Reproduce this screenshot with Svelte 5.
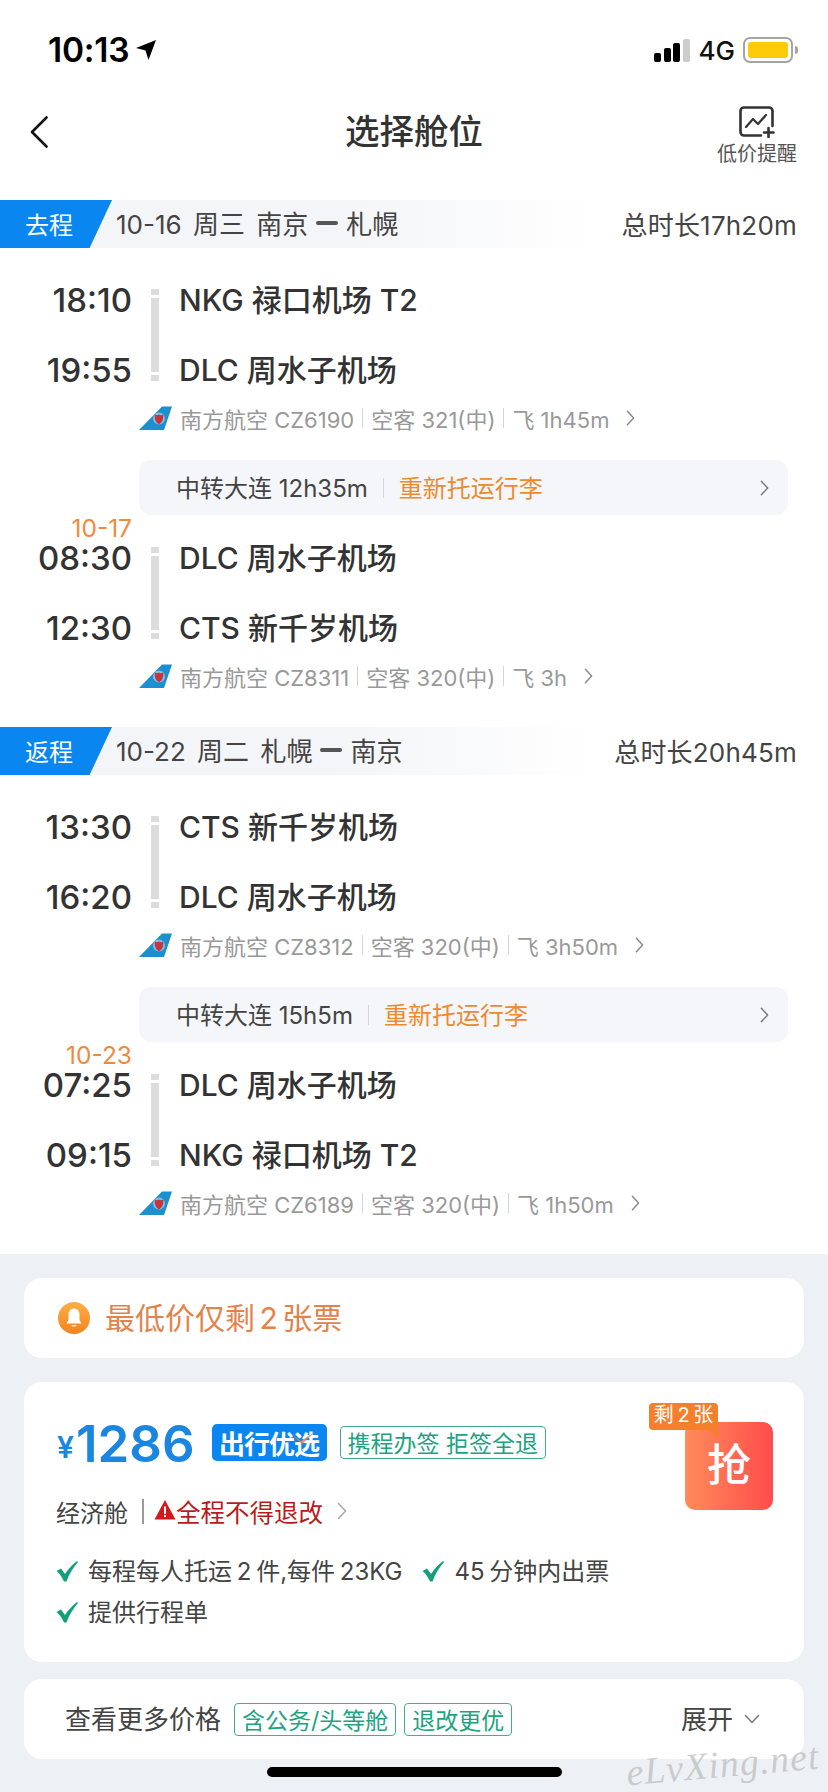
<script>
  const legs = [
    {
      tag: '去程',
      route: '10-16 周三 南京',
      dest: '札幌',
      total: '总时长17h20m',
      segs: [
        { dep: '18:10', arr: '19:55', from: 'NKG 禄口机场 T2', to: 'DLC 周水子机场', flight: '南方航空 CZ6190', plane: '空客 321(中)', time: '飞 1h45m' },
        { date: '10-17', dep: '08:30', arr: '12:30', from: 'DLC 周水子机场', to: 'CTS 新千岁机场', flight: '南方航空 CZ8311', plane: '空客 320(中)', time: '飞 3h' }
      ],
      transfer: '中转大连 12h35m'
    },
    {
      tag: '返程',
      route: '10-22 周二 札幌',
      dest: '南京',
      total: '总时长20h45m',
      segs: [
        { dep: '13:30', arr: '16:20', from: 'CTS 新千岁机场', to: 'DLC 周水子机场', flight: '南方航空 CZ8312', plane: '空客 320(中)', time: '飞 3h50m' },
        { date: '10-23', dep: '07:25', arr: '09:15', from: 'DLC 周水子机场', to: 'NKG 禄口机场 T2', flight: '南方航空 CZ6189', plane: '空客 320(中)', time: '飞 1h50m' }
      ],
      transfer: '中转大连 15h5m'
    }
  ]
</script>

{#snippet chevron(cls)}
  <svg class={cls} viewBox="0 0 10 18" fill="none" stroke="currentColor" stroke-width="1.6" stroke-linecap="round" stroke-linejoin="round">
    <path d="M1.5 1.5 8.5 9 1.5 16.5" />
  </svg>
{/snippet}

{#snippet check()}
  <svg class="check" viewBox="0 0 22 22">
    <path d="M.5 11 5 8.500 9 14C12 9 16 5 21 1L22 2C17 8 13 14 10.500 21.500H8C6 17 4 14 .5 11Z" fill="#12a07c" />
  </svg>
{/snippet}

<div class="page">
  <div class="status">
    <div class="clock">
      <span>10:13</span>
      <svg viewBox="0 0 22 22" class="loc"><path d="M21 1 13.500 21 10.500 11.500 1 9Z" fill="#000" /></svg>
    </div>
    <div class="status-right">
      <div class="signal">
        <i class="b1"></i><i class="b2"></i><i class="b3"></i><i class="b4"></i>
      </div>
      <span class="net">4G</span>
      <div class="battery"><div class="battery-fill"></div></div>
      <div class="nub"></div>
    </div>
  </div>

  <div class="nav">
    <svg class="back" viewBox="0 0 18 32" fill="none" stroke="#111" stroke-width="2.600" stroke-linecap="round" stroke-linejoin="round">
      <path d="M16.500 1.500 2 16 16.500 30.500" />
    </svg>
    <h1>选择舱位</h1>
    <div class="alert">
      <svg viewBox="0 0 36 32" fill="none" stroke="#333" stroke-width="2.600" stroke-linecap="round" stroke-linejoin="round">
        <path d="M22 29.500H5C3 29.500 1.500 28 1.500 26V5C1.500 3 3 1.500 5 1.500H30C32 1.500 33.500 3 33.500 5V20" />
        <path d="M7 21 14 13 19 18 27 9" stroke-width="2.200" />
        <path d="M29.500 22V31M25 26.500H34.500" />
      </svg>
      <span>低价提醒</span>
    </div>
  </div>

  {#each legs as leg}
    <section class="leg">
      <div class="leg-head">
        <span class="tag">{leg.tag}</span>
        <span class="route">{leg.route}<i class="dash"></i>{leg.dest}</span>
        <span class="total">{leg.total}</span>
      </div>

      {#each leg.segs as seg, i}
        {#if seg.date}
          <div class="next-date">{seg.date}</div>
        {/if}
        <div class="seg">
          <div class="time">{seg.dep}</div>
          <div class="bar"><i></i><i class="mid"></i><i></i></div>
          <div class="port">{seg.from}</div>
          <div class="time">{seg.arr}</div>
          <div class="port">{seg.to}</div>
        </div>
        <div class="info">
          <svg class="logo" viewBox="0 0 33 24">
            <path d="M0 24 23 .5H33L25 24Z" fill="#1b8fd0" />
            <circle cx="20" cy="12.500" r="6" fill="#7fbfe4" />
            <path d="M15.500 8C17 9.500 18.500 9.500 20 8.500 21.500 9.500 23 9.500 24.500 8L24 13C23.500 15.500 22 17 20 18.500 18 17 16.500 15.500 16 13Z" fill="#c8343c" />
          </svg>
          <span>{seg.flight}</span>
          <i class="sep"></i>
          <span>{seg.plane}</span>
          <i class="sep"></i>
          <span>{seg.time}</span>
          {@render chevron('info-arrow')}
        </div>
        {#if i === 0}
          <div class="transfer">
            <span>{leg.transfer}</span>
            <i class="sep"></i>
            <span class="orange">重新托运行李</span>
            {@render chevron('transfer-arrow')}
          </div>
        {/if}
      {/each}
    </section>
  {/each}

  <div class="bottom">
    <div class="card notice">
      <svg class="bell" viewBox="0 0 32 32">
        <defs>
          <linearGradient id="bellg" x1="0" y1="0" x2="0" y2="1">
            <stop offset="0" stop-color="#fcb045" />
            <stop offset="1" stop-color="#f5821f" />
          </linearGradient>
        </defs>
        <circle cx="16" cy="16" r="16" fill="url(#bellg)" />
        <path d="M16 6.500C12 6.500 10.500 9.500 10.500 13V18L8.500 21.500H23.500L21.500 18V13C21.500 9.500 20 6.500 16 6.500Z" fill="#fff" />
        <path d="M13.500 23H18.500C18 25 14 25 13.500 23Z" fill="#fff" />
      </svg>
      <span>最低价仅剩 2 张票</span>
    </div>

    <div class="card offer">
      <div class="price-row">
        <span class="yen">¥</span><span class="price">1286</span>
        <span class="badge">出行优选<svg viewBox="0 0 28 14"><path d="M1 3 12 11 27 1 13 14Z" fill="#e2824a" opacity="0.85" /></svg></span>
        <span class="green-tag visa">携程办签 拒签全退</span>
      </div>
      <div class="cabin-row">
        <span>经济舱</span>
        <i class="cabin-sep"></i>
        <svg class="warn" viewBox="0 0 22 22">
          <path d="M11 1 21.500 20.500H.5Z" fill="#d21a1a" />
          <rect x="10" y="7.500" width="2" height="7.500" fill="#fff" />
          <rect x="10" y="16" width="2" height="2" fill="#fff" />
        </svg>
        <span class="red">全程不得退改</span>
        {@render chevron('cabin-arrow')}
      </div>
      <div class="perks">
        <div class="perk">{@render check()}<span>每程每人托运 2 件,每件 23KG</span></div>
        <div class="perk">{@render check()}<span>45 分钟内出票</span></div>
        <div class="perk">{@render check()}<span>提供行程单</span></div>
      </div>
      <div class="buy">
        <span>抢</span>
        <div class="left-tip">剩 2 张</div>
      </div>
    </div>

    <div class="card more">
      <span class="more-title">查看更多价格</span>
      <span class="green-tag">含公务/头等舱</span>
      <span class="green-tag">退改更优</span>
      <span class="expand">展开</span>
      <svg class="down" viewBox="0 0 16 10" fill="none" stroke="#777" stroke-width="1.500" stroke-linecap="round" stroke-linejoin="round">
        <path d="M1.500 1.500 8 8.500 14.500 1.500" />
      </svg>
    </div>

    <div class="home"></div>
    <div class="watermark">eLvXing.net</div>
  </div>
</div>

<style>
  :global(body) {
    margin: 0;
    background: #fff;
  }

  .page {
    position: relative;
    display: flex;
    flex-direction: column;
    width: 828px;
    height: 1792px;
    overflow: hidden;
    background: #fff;
    color: #333;
    font-family: Inter, "Noto Sans CJK SC", sans-serif;
  }

  i {
    display: block;
    font-style: normal;
  }

  /* Status bar */
  .status {
    display: flex;
    align-items: center;
    justify-content: space-between;
    height: 100px;
    padding: 0 30px 0 48px;
    box-sizing: border-box;
  }

  .clock {
    display: flex;
    align-items: center;
    gap: 6px;
    font-size: 33.500px;
    font-weight: 600;
    letter-spacing: -0.2px;
    color: #000;
  }

  .loc {
    width: 22px;
    height: 22px;
  }

  .status-right {
    display: flex;
    align-items: center;
  }

  .signal {
    display: flex;
    align-items: flex-end;
    gap: 2.500px;
    height: 23px;
    margin-right: 9px;
  }

  .signal i {
    width: 7px;
    border-radius: 2px;
    background: #000;
  }

  .b1 { height: 9px; }
  .b2 { height: 14px; }
  .b3 { height: 19px; }
  .signal .b4 { height: 23px; background: #ccc; }

  .net {
    font-size: 26px;
    font-weight: 500;
    color: #111;
    margin-right: 8px;
  }

  .battery {
    width: 50px;
    height: 26px;
    padding: 3px;
    box-sizing: border-box;
    border: 2px solid #a5a5a0;
    border-radius: 7px;
  }

  .battery-fill {
    height: 100%;
    border-radius: 3px;
    background: #fdcb0a;
  }

  .nub {
    width: 3px;
    height: 8px;
    margin-left: 2px;
    border-radius: 0 3px 3px 0;
    background: #a5a5a0;
  }

  /* Nav */
  .nav {
    display: flex;
    align-items: center;
    justify-content: center;
    position: relative;
    height: 100px;
  }

  .back {
    position: absolute;
    left: 30px;
    top: 16px;
    width: 18px;
    height: 32px;
  }

  h1 {
    margin: 0 0 42px;
    font-size: 34.500px;
    font-weight: 500;
    color: #333;
  }

  .alert {
    position: absolute;
    right: 31px;
    top: 6px;
    display: flex;
    flex-direction: column;
    align-items: center;
    gap: 4px;
    font-size: 20px;
    line-height: 24px;
    color: #555;
  }

  .alert svg {
    width: 36px;
    height: 32px;
  }

  /* Legs */
  .leg-head {
    display: flex;
    align-items: center;
    height: 48px;
    padding-right: 31px;
    margin-bottom: 17px;
    background: linear-gradient(90deg, #f4f5f8 40%, #fff 72%);
  }

  .leg + .leg {
    margin-top: 35px;
  }

  .tag {
    display: flex;
    align-items: center;
    width: 112px;
    height: 48px;
    padding: 0 0 2px 25px;
    box-sizing: border-box;
    font-size: 24px;
    color: #fff;
    background: #0a86f0;
    clip-path: polygon(0 0, 100% 0, 80% 100%, 0 100%);
  }

  .route {
    display: flex;
    align-items: center;
    margin: 0 0 3px 4px;
    flex: 1;
    font-size: 26px;
    word-spacing: 4px;
    color: #444;
  }

  .dash {
    width: 22px;
    height: 4px;
    margin: 0 8px;
    background: #555;
    border-radius: 2px;
  }

  .total {
    margin-bottom: 2px;
    font-size: 26px;
    letter-spacing: 0.2px;
    color: #444;
  }

  .seg {
    display: grid;
    grid-template-columns: 132px 48px 1fr;
    grid-template-rows: 70px 70px;
    align-items: center;
  }

  .time {
    grid-column: 1;
    text-align: right;
    font-size: 33px;
    font-weight: 500;
    color: #333;
  }

  .bar {
    grid-column: 2;
    grid-row: 1 / 3;
    display: flex;
    flex-direction: column;
    gap: 3px;
    justify-self: start;
    width: 8px;
    height: 92px;
    margin-left: 19px;
  }

  .bar i {
    height: 6px;
    background: #dcdcdc;
  }

  .bar .mid {
    flex: 1;
  }

  .port {
    grid-column: 3;
    margin: 0 0 5px -1px;
    font-size: 30px;
    font-weight: 500;
    color: #333;
  }

  .info {
    display: flex;
    align-items: center;
    height: 29px;
    padding: 0 0 3px 139px;
    box-sizing: border-box;
    font-size: 22px;
    color: #999;
  }

  .logo {
    width: 33px;
    height: 24px;
    margin-right: 8px;
  }

  .sep {
    width: 1px;
    height: 20px;
    margin: 0 8px;
    background: #d5d5d5;
  }

  :global(.info-arrow) {
    width: 9px;
    height: 16px;
    margin-left: 17px;
    color: #888;
  }

  .transfer {
    display: flex;
    align-items: center;
    height: 55px;
    margin: 26px 40px 0 139px;
    padding: 0 19px 0 37px;
    border-radius: 12px;
    background: #f4f6f9;
    font-size: 24px;
    color: #444;
  }

  .transfer span {
    margin-bottom: 2px;
  }

  .transfer .sep {
    margin: 0 15px;
  }

  .orange {
    flex: 1;
    color: #ee8a2e;
  }

  :global(.transfer-arrow) {
    width: 9px;
    height: 18px;
    color: #777;
  }

  .next-date {
    width: 132px;
    height: 22px;
    margin-top: 2px;
    margin-bottom: -16px;
    text-align: right;
    font-size: 24.500px;
    line-height: 22px;
    color: #ee8a3e;
  }

  /* Bottom section */
  .bottom {
    position: relative;
    flex: 1;
    margin-top: 35px;
    padding: 24px 24px 0;
    background: #edf1f6;
  }

  .card {
    background: #fff;
    border-radius: 18px;
  }

  .notice {
    display: flex;
    align-items: center;
    gap: 15px;
    height: 80px;
    padding-left: 34px;
    margin-bottom: 24px;
    font-size: 30px;
    word-spacing: -4px;
    color: #e2834b;
  }

  .notice span {
    margin-bottom: 4px;
  }

  .bell {
    width: 32px;
    height: 32px;
  }

  .offer {
    position: relative;
    box-sizing: border-box;
    height: 280px;
    margin-bottom: 17px;
    padding: 35px 33px 0;
  }

  .price-row {
    display: flex;
    align-items: center;
    height: 52px;
    color: #1a86e0;
  }

  .yen {
    font-size: 30px;
    font-weight: 600;
    margin-top: 8px;
    margin-right: 2px;
  }

  .price {
    font-size: 51px;
    font-weight: 600;
    margin-right: 17px;
  }

  .badge {
    position: relative;
    display: flex;
    align-items: center;
    justify-content: center;
    width: 115px;
    height: 37px;
    margin-bottom: 2px;
    border-radius: 5px;
    background: #0a86f0;
    font-size: 26px;
    font-weight: 700;
    color: #fff;
    white-space: nowrap;
    letter-spacing: -1px;
  }

  .badge svg {
    position: absolute;
    left: 77px;
    top: 6px;
    width: 28px;
    height: 14px;
  }

  .green-tag {
    display: flex;
    align-items: center;
    justify-content: center;
    height: 31px;
    padding: 0 7px;
    border: 1px solid #45ac92;
    border-radius: 4px;
    font-size: 23px;
    color: #1da37f;
    white-space: nowrap;
  }

  .visa {
    margin: 0 0 2px 13px;
  }

  .cabin-row {
    display: flex;
    align-items: center;
    height: 36px;
    margin: 24px 0 0 -1px;
    font-size: 24px;
    color: #444;
  }

  .cabin-sep {
    width: 2px;
    height: 25px;
    margin: 0 10px 0 14px;
    background: #999;
  }

  .warn {
    width: 22px;
    height: 22px;
    margin-bottom: 3px;
  }

  .red {
    font-size: 24.500px;
    color: #b81c1c;
  }

  :global(.cabin-arrow) {
    width: 10px;
    height: 18px;
    margin-left: 14px;
    color: #aaa;
  }

  .perks {
    display: flex;
    flex-wrap: wrap;
    gap: 0 21px;
    width: 640px;
    margin-top: 21px;
  }

  .perk {
    display: flex;
    align-items: center;
    gap: 10px;
    height: 41px;
    font-size: 24px;
    word-spacing: -2px;
    color: #444;
  }

  .perk span {
    margin-bottom: 2px;
  }

  :global(.check) {
    width: 22px;
    height: 22px;
    margin-left: -1px;
  }

  .buy {
    position: absolute;
    right: 31px;
    top: 40px;
    display: flex;
    align-items: center;
    justify-content: center;
    width: 88px;
    height: 88px;
    padding-bottom: 8px;
    box-sizing: border-box;
    border-radius: 10px;
    background: linear-gradient(90deg, #ff8b5a, #ff4c4c);
    font-size: 44px;
    font-weight: 500;
    color: #fff;
  }

  .left-tip {
    position: absolute;
    left: -36px;
    top: -19px;
    width: 69px;
    height: 27px;
    border-radius: 4px;
    background: #f5802c;
    font-size: 20px;
    font-weight: 400;
    word-spacing: -2px;
    line-height: 25px;
    text-align: center;
    color: #fff;
    white-space: nowrap;
  }

  .left-tip::after {
    content: '';
    position: absolute;
    right: 0;
    top: 25px;
    border-top: 10px solid #f5802c;
    border-left: 10px solid transparent;
  }

  .more {
    display: flex;
    align-items: center;
    gap: 8px;
    height: 80px;
    padding: 0 44px 0 41px;
  }

  .more-title {
    margin: 0 5px 4px 0;
    font-size: 26px;
    color: #444;
  }

  .expand {
    margin: 0 0 4px auto;
    font-size: 26px;
    color: #444;
  }

  .down {
    width: 16px;
    height: 10px;
    margin-left: 3px;
  }

  .home {
    width: 295px;
    height: 10px;
    margin: 8px auto 0;
    border-radius: 5px;
    background: #000;
  }

  .watermark {
    position: absolute;
    right: 8px;
    bottom: 6px;
    font-family: "Liberation Serif", serif;
    font-style: italic;
    font-size: 38px;
    letter-spacing: 1px;
    color: rgba(190, 190, 190, 0.75);
    transform: rotate(-5deg);
  }
</style>
